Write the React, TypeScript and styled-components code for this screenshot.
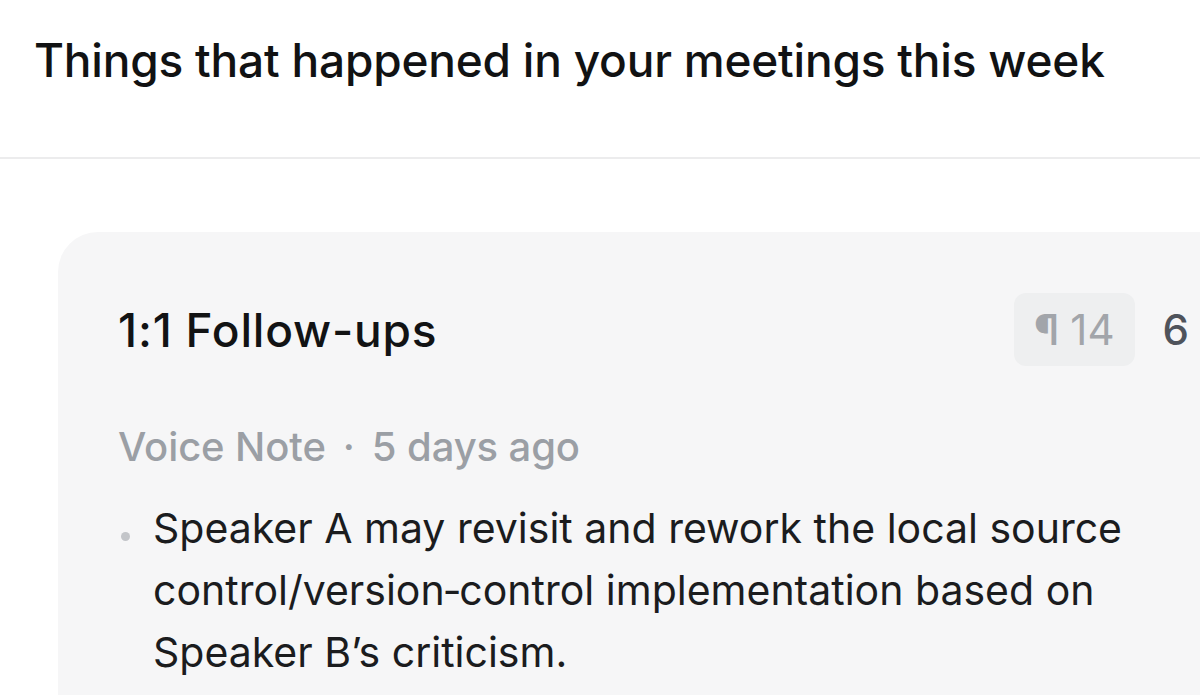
import React from "react";
import styled, { createGlobalStyle } from "styled-components";

interface IHighlight {
  id: number;
  text: string;
}

interface IMeeting {
  title: string;
  paragraphs: number;
  items: number;
  source: string;
  when: string;
  highlights: IHighlight[];
}

const GlobalStyle = createGlobalStyle`
  html, body {
    margin: 0;
    padding: 0;
    background: #ffffff;
    overflow: hidden;
  }
  body {
    font-family: Inter, "Noto Sans", sans-serif;
    -webkit-font-smoothing: antialiased;
  }
`;

const Page = styled.div`
  width: 1200px;
  height: 695px;
  overflow: hidden;
`;

const Header = styled.header`
  padding: 32px 34px 69px;
  border-bottom: 2px solid #ececed;
`;

const Heading = styled.h1`
  margin: 0;
  font-size: 46px;
  line-height: 56px;
  font-weight: 500;
  color: #111213;
  letter-spacing: -0.2px;
  white-space: nowrap;
`;

const Feed = styled.main`
  padding: 73px 0 0 58px;
`;

const Card = styled.section`
  background: #f6f6f7;
  border-radius: 40px 0 0 0;
  padding: 61px 11px 40px 60px;
  min-height: 500px;
`;

const TitleRow = styled.div`
  display: flex;
  align-items: center;
  justify-content: space-between;
`;

const Title = styled.h2`
  margin: 0;
  font-size: 46px;
  line-height: 56px;
  font-weight: 500;
  color: #121314;
  letter-spacing: 0.8px;
`;

const Counters = styled.div`
  display: flex;
  align-items: center;
  gap: 28px;
`;

const Badge = styled.span`
  display: inline-flex;
  align-items: center;
  gap: 11px;
  height: 73px;
  padding: 0 20px;
  border-radius: 12px;
  background: #eeeff0;
  color: #a2a5aa;
  font-size: 42px;
  font-weight: 400;
`;

const Pilcrow = styled.span`
  font-weight: 600;
`;

const Count = styled.span`
  font-size: 42px;
  font-weight: 500;
  color: #4f535b;
`;

const Meta = styled.div`
  margin-top: 56px;
  font-size: 40px;
  line-height: 50px;
  font-weight: 500;
  color: #9b9fa5;
  letter-spacing: -0.1px;
`;

const Dot = styled.span`
  margin: 0 17px;
`;

const List = styled.ul`
  list-style: none;
  margin: 25px 0 0;
  padding: 0;
  width: 1045px;
`;

const Item = styled.li`
  display: flex;
  font-size: 41px;
  line-height: 62px;
  color: #1b1c1e;

  &::before {
    content: "";
    flex: 0 0 9px;
    height: 9px;
    margin: 35px 23px 0 3px;
    border-radius: 50%;
    background: #c3c5c9;
  }
`;

const meeting: IMeeting = {
  title: "1:1 Follow-ups",
  paragraphs: 14,
  items: 6,
  source: "Voice Note",
  when: "5 days ago",
  highlights: [
    {
      id: 1,
      text: "Speaker A may revisit and rework the local source control/version\u2011control implementation based on Speaker B\u2019s criticism.",
    },
  ],
};

const App = () => {
  return (
    <>
      <GlobalStyle />
      <Page>
        <Header>
          <Heading>Things that happened in your meetings this week</Heading>
        </Header>
        <Feed>
          <Card>
            <TitleRow>
              <Title>{meeting.title}</Title>
              <Counters>
                <Badge>
                  <Pilcrow>¶</Pilcrow>
                  <span>{meeting.paragraphs}</span>
                </Badge>
                <Count>{meeting.items}</Count>
              </Counters>
            </TitleRow>
            <Meta>
              {meeting.source}
              <Dot>·</Dot>
              {meeting.when}
            </Meta>
            <List>
              {meeting.highlights.map((h) => (
                <Item key={h.id}>{h.text}</Item>
              ))}
            </List>
          </Card>
        </Feed>
      </Page>
    </>
  );
};

export default App;
